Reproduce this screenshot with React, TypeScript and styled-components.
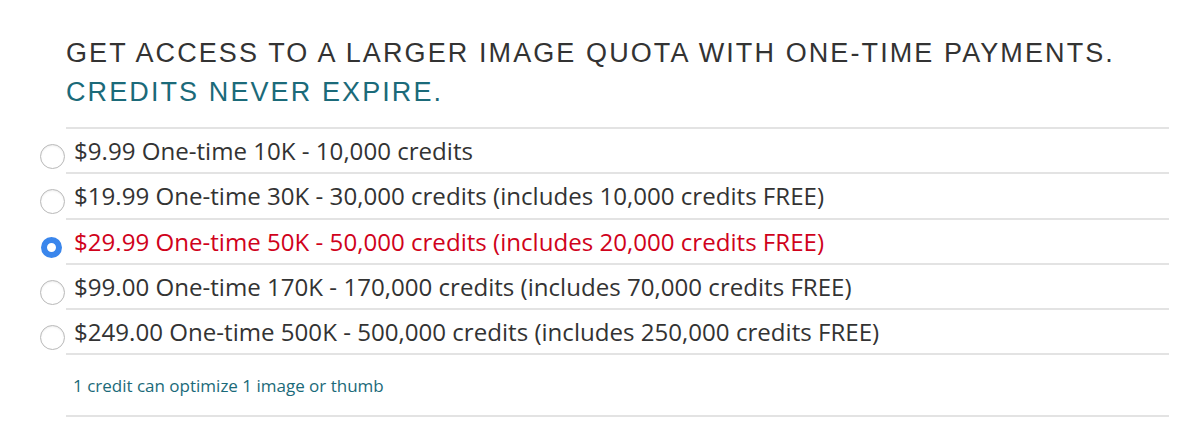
import React, { useState } from 'react';
import styled, { createGlobalStyle } from 'styled-components';

const GlobalStyle = createGlobalStyle`
  html, body {
    margin: 0;
    padding: 0;
    background: #ffffff;
  }
`;

const Wrapper = styled.div`
  width: 1200px;
  height: 428px;
  box-sizing: border-box;
  padding: 34px 31px 0 66px;
  background: #ffffff;
  overflow: hidden;
`;

const Heading = styled.h2`
  margin: 0 0 15px;
  font-family: 'Liberation Sans', Arial, sans-serif;
  font-weight: 400;
  font-size: 27px;
  line-height: 39px;
  letter-spacing: 2.1px;
  color: #333333;
  text-transform: uppercase;
  white-space: nowrap;
`;

const Highlight = styled.span`
  display: block;
  color: #1b6a79;
`;

const PlanList = styled.div`
  display: flex;
  flex-direction: column;
  border-top: 2px solid #e3e3e3;
`;

const PlanRow = styled.label<{ checked: boolean }>`
  display: flex;
  align-items: center;
  height: 45.3px;
  box-sizing: border-box;
  border-bottom: 2px solid #e3e3e3;
  font-family: 'Open Sans', 'Noto Sans', sans-serif;
  font-size: 24.1px;
  color: ${props => (props.checked ? '#d0021b' : '#333333')};
  cursor: pointer;
`;

const RadioSlot = styled.span`
  width: 28px;
  margin-left: -28px;
  display: flex;
  justify-content: center;
  margin-top: 12px;
`;

const Radio = styled.span<{ checked: boolean }>`
  box-sizing: border-box;
  width: ${props => (props.checked ? '21px' : '25px')};
  height: ${props => (props.checked ? '21px' : '25px')};
  margin-left: ${props => (props.checked ? '-2px' : '0')};
  border-radius: 50%;
  border: ${props => (props.checked ? '6.5px solid #3a86ec' : '1px solid #b9b9b9')};
  background: #ffffff;
  box-shadow: ${props => (props.checked ? 'none' : 'inset 0 1px 2px rgba(0,0,0,0.08)')};
`;

const PlanText = styled.span`
  padding-left: 8px;
  white-space: nowrap;
`;

const Note = styled.div`
  height: 62px;
  display: flex;
  align-items: center;
  padding-left: 7px;
  box-sizing: border-box;
  border-bottom: 2px solid #e3e3e3;
  font-family: 'Open Sans', 'Noto Sans', sans-serif;
  font-size: 17px;
  color: #1b6a79;
`;

const plans = [
  '$9.99 One-time 10K - 10,000 credits',
  '$19.99 One-time 30K - 30,000 credits (includes 10,000 credits FREE)',
  '$29.99 One-time 50K - 50,000 credits (includes 20,000 credits FREE)',
  '$99.00 One-time 170K - 170,000 credits (includes 70,000 credits FREE)',
  '$249.00 One-time 500K - 500,000 credits (includes 250,000 credits FREE)',
];

export default function App() {
  const [selected, setSelected] = useState(2);

  return (
    <>
      <GlobalStyle />
      <Wrapper>
        <Heading>
          Get access to a larger image quota with one-time payments.
          <Highlight>Credits never expire.</Highlight>
        </Heading>
        <PlanList>
          {plans.map((label, i) => (
            <PlanRow key={label} checked={selected === i} onClick={() => setSelected(i)}>
              <RadioSlot>
                <Radio checked={selected === i} />
              </RadioSlot>
              <PlanText>{label}</PlanText>
            </PlanRow>
          ))}
          <Note>1 credit can optimize 1 image or thumb</Note>
        </PlanList>
      </Wrapper>
    </>
  );
}
